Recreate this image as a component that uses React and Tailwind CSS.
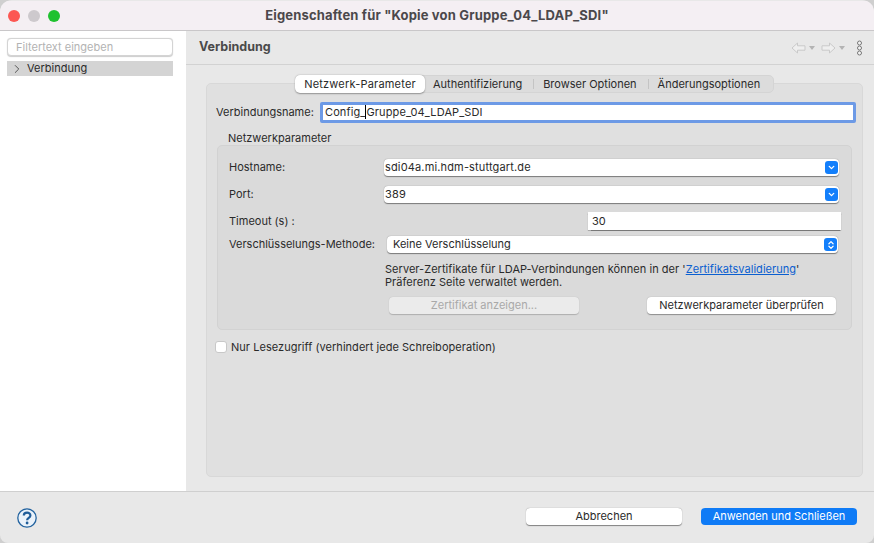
import React from 'react';
import { ChevronRight, ChevronDown, ChevronsUpDown } from 'lucide-react';

const font = { fontFamily: 'Inter, "Liberation Sans", sans-serif' };

function Combo({ value, indent, double }) {
  return (
    <div className={`h-[17px] flex-1 flex items-center bg-white rounded-[4px] shadow-[0_0.5px_1px_rgba(0,0,0,0.45)] ${double ? 'mr-[1px]' : ''}`}>
      <span className={`flex-1 text-[11px] text-[#2a2a2a] ${indent ? 'pl-[6px]' : 'pl-[1px] tracking-[0.15px]'}`}>{value}</span>
      <span className="w-[13px] h-[13px] mr-[1px] rounded-[3px] bg-[#137ffb] flex items-center justify-center text-white">
        {double ? <ChevronsUpDown size={10} strokeWidth={3} /> : <ChevronDown size={9} strokeWidth={3.5} />}
      </span>
    </div>
  );
}

function Arrow({ flip }) {
  return (
    <svg width="15" height="12" viewBox="0 0 15 12" className={flip ? '-scale-x-100' : ''}>
      <path d="M1 6 L6.5 1 V3.8 H14 V8.2 H6.5 V11 Z" fill="#efefef" stroke="#c9c9c9" strokeWidth="1" />
    </svg>
  );
}

function Caret() {
  return <span className="w-0 h-0 border-x-[3px] border-x-transparent border-t-[4px] border-t-[#b4b4b4]" />;
}

export default function App() {
  return (
    <div style={font} className="w-[874px] h-[543px] overflow-hidden bg-[#cfcfcf] text-[11px] text-[#2a2a2a]">
      <div className="h-full pt-[1px] flex flex-col rounded-t-[12px] rounded-b-[8px] overflow-hidden bg-[#e8e8e8]">
        {/* Titelleiste */}
        <div className="relative h-[30px] shrink-0 flex items-center justify-center bg-[#f4eff3] border-b border-[#c9c7c9]">
          <div className="absolute left-[8px] top-[9px] flex gap-[8px]">
            <span className="w-[12px] h-[12px] rounded-full bg-[#fc5753]" />
            <span className="w-[12px] h-[12px] rounded-full bg-[#cdc9cd]" />
            <span className="w-[12px] h-[12px] rounded-full bg-[#1fc12f]" />
          </div>
          <span className="text-[13px] tracking-[0.17px] font-bold text-[#4b484b]">Eigenschaften für "Kopie von Gruppe_04_LDAP_SDI"</span>
        </div>

        <div className="flex-1 min-h-0 flex">
          {/* Seitenleiste */}
          <div className="w-[186px] shrink-0 bg-white pt-[7px] pl-[7px] pr-[13px]">
            <div className="h-[18px] flex items-center pl-[8px] bg-white rounded-[4px] border border-[#d4d4d4] shadow-[0_0.5px_1px_rgba(0,0,0,0.2)] text-[#b3b3b3]">
              Filtertext eingeben
            </div>
            <div className="mt-[5px] h-[15px] flex items-center bg-[#d4d4d4]">
              <ChevronRight size={14} strokeWidth={1.7} className="ml-[3px] text-[#555]" />
              <span className="ml-[3px] text-[#2a2a2a]">Verbindung</span>
            </div>
          </div>

          {/* Inhalt */}
          <div className="flex-1 min-w-0 flex flex-col">
            <div className="h-[34px] shrink-0 flex items-center justify-between pl-[13px] pr-[11px] border-b border-[#d2d2d2]">
              <span className="text-[12.5px] font-bold text-[#4a4a4a]">Verbindung</span>
              <div className="flex items-center">
                <Arrow />
                <span className="ml-[3px] flex"><Caret /></span>
                <span className="ml-[6px] flex"><Arrow flip /></span>
                <span className="ml-[3px] flex"><Caret /></span>
                <svg width="7" height="16" viewBox="0 0 7 16" className="ml-[11px]">
                  <circle cx="3.5" cy="3" r="2" fill="#f2f2f2" stroke="#777" />
                  <circle cx="3.5" cy="8" r="2" fill="#f2f2f2" stroke="#777" />
                  <circle cx="3.5" cy="13" r="2" fill="#f2f2f2" stroke="#777" />
                </svg>
              </div>
            </div>

            <div className="relative flex-1 min-h-0 pt-[18px] pl-[20px] pr-[11px] pb-[14px]">
              <div className="h-full rounded-[5px] bg-[#e0e0e0] border border-[#d8d8d8] pl-[9px] pr-[6px] pt-[17px]">
                {/* Verbindungsname */}
                <div className="flex items-center h-[22px]">
                  <span className="w-[104px] shrink-0">Verbindungsname:</span>
                  <div className="flex-1 h-[21px] flex items-center bg-white rounded-[2px] border-[3px] border-[#6d9ae6] pl-[2px] tracking-[0.12px]">
                    <span>Config_</span>
                    <span className="w-px h-[14px] bg-black" />
                    <span>Gruppe_04_LDAP_SDI</span>
                  </div>
                </div>

                {/* Netzwerkparameter */}
                <div className="mt-[8px] pl-[12px] h-[14px] leading-[14px]">Netzwerkparameter</div>
                <div className="ml-[1px] mr-[4px] h-[185px] rounded-[5px] bg-[#dadada] border border-[#d2d2d2] pl-[11px] pr-[12px] pt-[13px]">
                  <div className="flex items-center">
                    <span className="w-[155px] shrink-0">Hostname:</span>
                    <Combo value="sdi04a.mi.hdm-stuttgart.de" />
                  </div>
                  <div className="mt-[10px] flex items-center">
                    <span className="w-[155px] shrink-0">Port:</span>
                    <Combo value="389" />
                  </div>
                  <div className="mt-[9px] -mr-[2px] h-[18px] flex items-center justify-between">
                    <span>Timeout (s) :</span>
                    <div className="w-[253px] h-[18px] flex items-center pl-[4px] bg-white shadow-[0_0.5px_1px_rgba(0,0,0,0.45)]">30</div>
                  </div>
                  <div className="mt-[6px] flex items-center">
                    <span className="w-[158px] shrink-0">Verschlüsselungs-Methode:</span>
                    <Combo value="Keine Verschlüsselung" indent double />
                  </div>
                  <p className="mt-[10px] ml-[156px] leading-[13px] tracking-[0.04px]">
                    Server-Zertifikate für LDAP-Verbindungen können in der '<span className="text-[#0b5fd0] underline">Zertifikatsvalidierung</span>'<br />
                    Präferenz Seite verwaltet werden.
                  </p>
                  <div className="mt-[8px] ml-[160px] mr-[3px] flex justify-between">
                    <div className="w-[190px] h-[17px] flex items-center justify-center rounded-[4px] bg-[#ebebeb] text-[#a9a9a9] shadow-[0_0.5px_1px_rgba(0,0,0,0.2)]">Zertifikat anzeigen...</div>
                    <div className="w-[189px] h-[17px] flex items-center justify-center rounded-[4px] bg-white shadow-[0_0.5px_1px_rgba(0,0,0,0.35)]">Netzwerkparameter überprüfen</div>
                  </div>
                </div>

                {/* Checkbox */}
                <div className="mt-[9px] -ml-[1px] flex items-center">
                  <span className="w-[12px] h-[12px] rounded-[3px] bg-white border border-[#c8c8c8]" />
                  <span className="ml-[4px] tracking-[0.04px]">Nur Lesezugriff (verhindert jede Schreiboperation)</span>
                </div>
              </div>

              {/* Reiter */}
              <div className="absolute left-[109px] top-[10px] h-[18px] w-[479px] flex items-center rounded-[5px] bg-[#dcdcdc] border border-[#d4d4d4]">
                <div className="w-[130px] h-[18px] -ml-px flex items-center justify-center bg-white rounded-[5px] shadow-[0_0.5px_1.5px_rgba(0,0,0,0.35)] tracking-[0.2px]">Netzwerk-Parameter</div>
                <span className="ml-[8px]">Authentifizierung</span>
                <span className="ml-[11px] w-px h-[10px] bg-[#c4c4c4]" />
                <span className="ml-[9px]">Browser Optionen</span>
                <span className="ml-[11px] w-px h-[10px] bg-[#c4c4c4]" />
                <span className="ml-[9px]">Änderungsoptionen</span>
              </div>
            </div>
          </div>
        </div>

        {/* Fußleiste */}
        <div className="h-[52px] shrink-0 border-t border-[#cfcfcf] flex items-center pl-[17px] pr-[17px]">
          <svg width="20" height="20" viewBox="0 0 20 20">
            <circle cx="10" cy="10" r="9.2" fill="#eaf2fa" stroke="#23639f" strokeWidth="1.3" />
            <path d="M6.8 7.5 C6.8 3.6 13.4 3.6 13.4 7.4 C13.4 9.8 10.1 9.8 10.1 12.2" fill="none" stroke="#1f5d99" strokeWidth="2.2" />
            <circle cx="10.1" cy="15" r="1.4" fill="#1f5d99" />
          </svg>
          <div className="ml-auto mb-[2px] w-[156px] h-[17px] flex items-center justify-center rounded-[4px] bg-white shadow-[0_0.5px_1px_rgba(0,0,0,0.45)]">Abbrechen</div>
          <div className="ml-[19px] mb-[2px] w-[156px] h-[17px] flex items-center justify-center rounded-[4px] bg-[#0f7bf6] text-white">Anwenden und Schließen</div>
        </div>
      </div>
    </div>
  );
}
